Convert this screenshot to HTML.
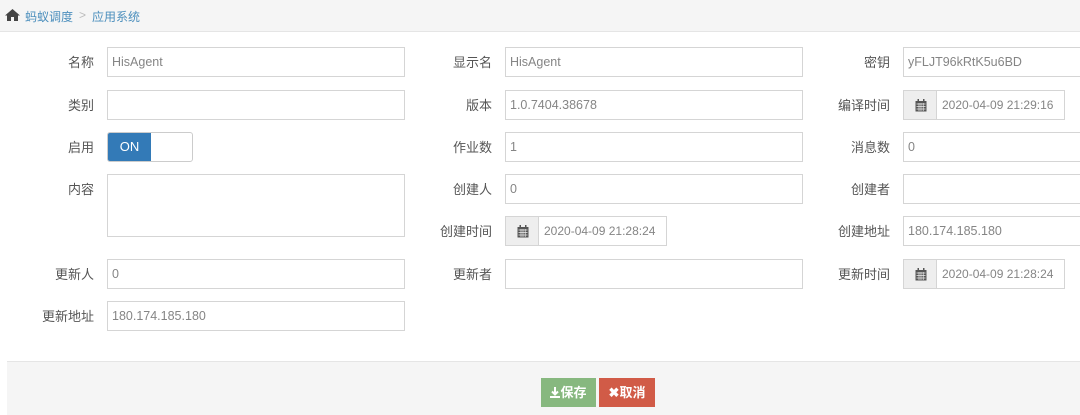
<!DOCTYPE html>
<html><head><meta charset="utf-8"><style>
*{box-sizing:border-box;margin:0;padding:0}
body{width:1080px;height:415px;overflow:hidden;background:#fff;font-family:"Liberation Sans","Noto Sans CJK SC",sans-serif;font-size:13px;color:#393939;position:relative}
.bc{position:absolute;left:0;top:0;width:1080px;height:32px;background:#f5f5f5;border-bottom:1px solid #e5e5e5}
.bc span{position:absolute;top:8px;font-size:12px;color:#4c8fbd}
.l{position:absolute;text-align:right;width:120px;font-size:13px;color:#555;line-height:31px}
.i{position:absolute;height:30px;border:1px solid #d5d5d5;background:#fff;padding-left:4px;line-height:29px;color:#858585;font-size:12.5px}
.ad{position:absolute;height:30px;width:34px;border:1px solid #d5d5d5;background:#eee}
.ad svg{position:absolute;left:11px;top:8px}
.d{font-size:12px}
.ft{position:absolute;left:7px;top:361px;width:1073px;height:54px;background:#f5f5f5;border-top:1px solid #e5e5e5}
.b{position:absolute;top:378px;height:29px;color:#fff;font-weight:bold;font-size:13px;line-height:29px;text-align:center}
</style></head><body>
<div class="bc">
<svg style="position:absolute;left:5px;top:9px" width="15" height="12" viewBox="0 0 15 12"><path d="M7.5 0L0 6.5h2V12h4V8h3v4h4V6.5h2z" fill="#444"/></svg>
<span style="left:25px">蚂蚁调度</span><span style="left:79px;color:#bbb">&gt;</span><span style="left:92px">应用系统</span>
</div>
<div class="l" style="left:-26px;top:47px">名称</div><div class="i" style="left:107px;top:47px;width:298px">HisAgent</div>
<div class="l" style="left:372px;top:47px">显示名</div><div class="i" style="left:505px;top:47px;width:298px">HisAgent</div>
<div class="l" style="left:770px;top:47px">密钥</div><div class="i" style="left:903px;top:47px;width:190px">yFLJT96kRtK5u6BD</div>

<div class="l" style="left:-26px;top:90px">类别</div><div class="i" style="left:107px;top:90px;width:298px"></div>
<div class="l" style="left:372px;top:90px">版本</div><div class="i" style="left:505px;top:90px;width:298px">1.0.7404.38678</div>
<div class="l" style="left:770px;top:90px">编译时间</div><div class="ad" style="left:903px;top:90px"><svg width="12" height="13" viewBox="0 0 12 13"><rect x="0.5" y="2" width="11" height="10.5" fill="#555"/><rect x="2.5" y="0" width="1.5" height="3" fill="#555"/><rect x="8" y="0" width="1.5" height="3" fill="#555"/><path d="M1.5 5h9M1.5 7.5h9M1.5 10h9M4 4v8M6 4v8M8.2 4v8" stroke="#eee" stroke-width=".7"/></svg></div><div class="i d" style="left:936px;top:90px;width:129px;padding-left:5px">2020-04-09 21:29:16</div>

<div class="l" style="left:-26px;top:132px">启用</div>
<div style="position:absolute;left:107px;top:132px;width:86px;height:30px;border:1px solid #ccc;border-radius:3px;background:#fff;overflow:hidden"><div style="width:43px;height:28px;background:#337ab7;color:#fff;line-height:28px;text-align:center;font-size:13px">ON</div></div>
<div class="l" style="left:372px;top:132px">作业数</div><div class="i" style="left:505px;top:132px;width:298px">1</div>
<div class="l" style="left:770px;top:132px">消息数</div><div class="i" style="left:903px;top:132px;width:190px">0</div>

<div class="l" style="left:-26px;top:174px">内容</div><div class="i" style="left:107px;top:174px;width:298px;height:63px"></div>
<div class="l" style="left:372px;top:174px">创建人</div><div class="i" style="left:505px;top:174px;width:298px">0</div>
<div class="l" style="left:770px;top:174px">创建者</div><div class="i" style="left:903px;top:174px;width:190px"></div>

<div class="l" style="left:372px;top:216px">创建时间</div><div class="ad" style="left:505px;top:216px"><svg width="12" height="13" viewBox="0 0 12 13"><rect x="0.5" y="2" width="11" height="10.5" fill="#555"/><rect x="2.5" y="0" width="1.5" height="3" fill="#555"/><rect x="8" y="0" width="1.5" height="3" fill="#555"/><path d="M1.5 5h9M1.5 7.5h9M1.5 10h9M4 4v8M6 4v8M8.2 4v8" stroke="#eee" stroke-width=".7"/></svg></div><div class="i d" style="left:538px;top:216px;width:129px;padding-left:5px">2020-04-09 21:28:24</div>
<div class="l" style="left:770px;top:216px">创建地址</div><div class="i" style="left:903px;top:216px;width:190px">180.174.185.180</div>

<div class="l" style="left:-26px;top:259px">更新人</div><div class="i" style="left:107px;top:259px;width:298px">0</div>
<div class="l" style="left:372px;top:259px">更新者</div><div class="i" style="left:505px;top:259px;width:298px"></div>
<div class="l" style="left:770px;top:259px">更新时间</div><div class="ad" style="left:903px;top:259px"><svg width="12" height="13" viewBox="0 0 12 13"><rect x="0.5" y="2" width="11" height="10.5" fill="#555"/><rect x="2.5" y="0" width="1.5" height="3" fill="#555"/><rect x="8" y="0" width="1.5" height="3" fill="#555"/><path d="M1.5 5h9M1.5 7.5h9M1.5 10h9M4 4v8M6 4v8M8.2 4v8" stroke="#eee" stroke-width=".7"/></svg></div><div class="i d" style="left:936px;top:259px;width:129px;padding-left:5px">2020-04-09 21:28:24</div>

<div class="l" style="left:-26px;top:301px">更新地址</div><div class="i" style="left:107px;top:301px;width:298px">180.174.185.180</div>

<div class="ft"></div>
<div class="b" style="left:541px;width:55px;background:#87b87f"><svg width="10" height="11" viewBox="0 0 10 11" style="vertical-align:-1px"><path d="M5 0v7M2 4.5L5 7.5 8 4.5" stroke="#fff" stroke-width="2" fill="none"/><rect x="0" y="9" width="10" height="2" fill="#fff"/></svg>保存</div>
<div class="b" style="left:599px;width:56px;background:#d15b47">✖取消</div>
</body></html>
